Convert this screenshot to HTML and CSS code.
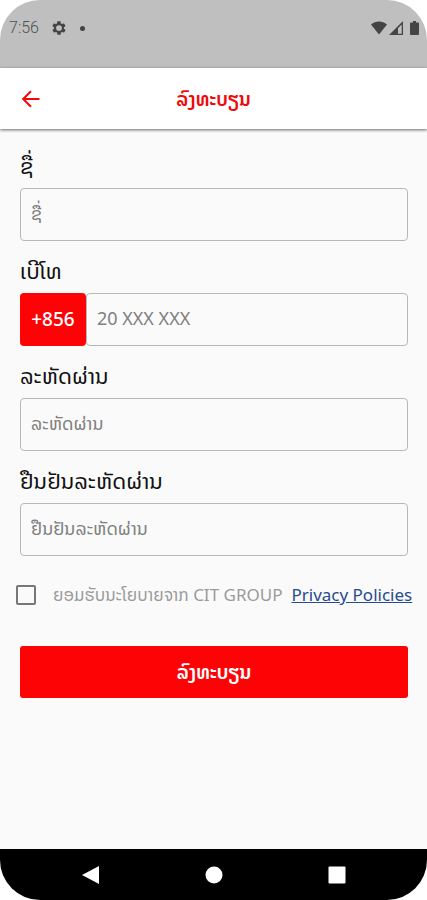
FILE: index.html
```html
<!DOCTYPE html>
<html lang="lo">
<head>
<meta charset="utf-8">
<meta name="viewport" content="width=device-width, initial-scale=1">
<title>ລົງທະບຽນ</title>
<link rel="stylesheet" href="styles.css">
</head>
<body>
<div class="phone">
  <div class="status">
    <div class="status-group">
      <span class="clock">7:56</span>
      <svg class="gear" viewBox="0 0 24 24" width="16" height="16" aria-hidden="true"><path fill-rule="evenodd" d="M19.4 13a7.500 7.500 0 0 0 0-2l2.100-1.600a.5.5 0 0 0 .1-.7l-2-3.400a.5.5 0 0 0-.6-.2l-2.500 1a7.300 7.300 0 0 0-1.700-1l-.4-2.700a.5.5 0 0 0-.5-.4h-4a.5.5 0 0 0-.5.4L9 5.100a7.700 7.700 0 0 0-1.700 1l-2.500-1a.5.5 0 0 0-.6.2l-2 3.400a.5.5 0 0 0 .1.700L4.500 11a7.500 7.500 0 0 0 0 2l-2.100 1.600a.5.5 0 0 0-.1.700l2 3.400c.1.200.4.300.6.200l2.500-1c.5.400 1.100.7 1.700 1l.4 2.700c0 .2.200.4.500.4h4c.3 0 .5-.2.5-.4l.4-2.700c.6-.3 1.200-.6 1.700-1l2.500 1c.2.100.5 0 .6-.2l2-3.400a.5.5 0 0 0-.1-.7zM12 16.300a4.300 4.300 0 1 1 0-8.600 4.300 4.300 0 0 1 0 8.600z"/></svg>
      <span class="dot"></span>
    </div>
    <div class="status-group status-right">
      <svg viewBox="0 0 16 14" width="16" height="14" aria-hidden="true"><path d="M0 3.500C4.500-.5 11.500-.5 16 3.500L8 13.500z"/></svg>
      <svg class="signal" viewBox="0 0 14 14" width="14" height="14" aria-hidden="true"><path fill-rule="evenodd" d="M14 0v14H0zM12.700 3.500L9 7.200v5.500h3.700z"/></svg>
      <svg class="battery" viewBox="0 0 9 14" width="9" height="14" aria-hidden="true"><path d="M3 0h3v1.500h2q1 0 1 1V13q0 1-1 1H1q-1 0-1-1V2.500q0-1 1-1h2z"/></svg>
    </div>
  </div>
  <header class="bar">
    <button class="back" type="button" aria-label="ກັບຄືນ">
      <svg viewBox="0 0 18 18" width="18" height="18" aria-hidden="true"><path d="M17.500 9H1.500M9 1.200L1.200 9 9 16.800"/></svg>
    </button>
    <h1 class="title">ລົງທະບຽນ</h1>
  </header>
  <form class="form">
    <div class="field">
      <label for="name">ຊື່</label>
      <input class="box" id="name" type="text" placeholder="ຊື່">
    </div>
    <div class="field">
      <label for="phone">ເບີໂທ</label>
      <div class="phone-row">
        <span class="code">+856</span>
        <input class="box" id="phone" type="tel" placeholder="20 XXX XXX">
      </div>
    </div>
    <div class="field">
      <label for="password">ລະຫັດຜ່ານ</label>
      <input class="box" id="password" type="password" placeholder="ລະຫັດຜ່ານ">
    </div>
    <div class="field">
      <label for="confirm">ຢືນຢັນລະຫັດຜ່ານ</label>
      <input class="box" id="confirm" type="password" placeholder="ຢືນຢັນລະຫັດຜ່ານ">
    </div>
    <div class="terms">
      <input class="check" id="agree" type="checkbox">
      <label for="agree">ຍອມຮັບນະໂຍບາຍຈາກ CIT GROUP</label>
      <a href="#privacy">Privacy Policies</a>
    </div>
    <button class="submit" type="submit">ລົງທະບຽນ</button>
  </form>
  <nav class="nav">
    <button type="button" aria-label="Back"><svg viewBox="0 0 18 18" width="18" height="18" aria-hidden="true"><path d="M17 0v18L0 9z"/></svg></button>
    <button type="button" aria-label="Home"><svg viewBox="0 0 18 18" width="18" height="18" aria-hidden="true"><circle cx="9" cy="9" r="8.500"/></svg></button>
    <button type="button" aria-label="Recents"><svg viewBox="0 0 18 18" width="18" height="18" aria-hidden="true"><rect x="0.500" y="0.500" width="17" height="17" rx="1"/></svg></button>
  </nav>
</div>
</body>
</html>
```
FILE: styles.css
```css
* {
  box-sizing: border-box;
}

body {
  margin: 0;
  background: #fff;
  font-family: "Noto Sans", "Noto Sans Lao", "DejaVu Sans", sans-serif;
}

button,
input {
  font: inherit;
}

button {
  border: 0;
  padding: 0;
  background: none;
}

.phone {
  display: flex;
  flex-direction: column;
  min-height: 100vh;
  border-radius: 40px;
  overflow: hidden;
  background: #fafafa;
}

.status {
  display: flex;
  justify-content: space-between;
  align-items: flex-start;
  height: 68px;
  padding: 18px 8px 0 9px;
  background: #bfbfbf;
  color: #505050;
}

.status-group {
  display: flex;
  align-items: center;
  height: 20px;
}

.status svg {
  fill: #444;
}

.clock {
  font: 300 16px/20px Roboto, sans-serif;
}

.gear {
  margin-left: 12px;
}

.dot {
  width: 5px;
  height: 5px;
  margin-left: 13px;
  border-radius: 50%;
  background: #444;
}

.signal {
  margin-left: 2px;
}

.battery {
  margin-left: 7px;
}

.bar {
  display: grid;
  grid-template-columns: 62px 1fr 62px;
  align-items: center;
  height: 61px;
  background: #fff;
  box-shadow: 0 1px 3px rgba(0, 0, 0, 0.6);
}

.back {
  display: grid;
  place-items: center;
  height: 48px;
}

.back svg {
  fill: none;
  stroke: #f00a0a;
  stroke-width: 2;
}

.title {
  margin: 0;
  color: #f00a0a;
  font-size: 19px;
  line-height: 24px;
  font-weight: 600;
  text-align: center;
}

.form {
  flex: 1;
  padding: 19px 19px 0 20px;
}

.field {
  margin-bottom: 12px;
}

.field label {
  display: block;
  height: 40px;
  color: #111;
  font-size: 22px;
  line-height: 34px;
}

.box {
  display: block;
  width: 100%;
  min-width: 0;
  height: 53px;
  padding: 0 10px 4px;
  border: 1px solid #b8b8b8;
  border-radius: 4px;
  background: transparent;
  color: #222;
  font-size: 18px;
}

.box::placeholder {
  color: #808080;
  opacity: 1;
}

.phone-row {
  display: flex;
}

.code {
  flex: none;
  width: 66px;
  border-radius: 4px;
  background: #fe0306;
  color: #fff;
  font-size: 19px;
  font-weight: 500;
  line-height: 53px;
  text-align: center;
}

.terms {
  display: flex;
  align-items: baseline;
  margin: 27px -12px 0 -4px;
  color: #9b9b9b;
  font-size: 17px;
  line-height: 24px;
  white-space: nowrap;
}

.check {
  appearance: none;
  flex: none;
  align-self: center;
  width: 20px;
  height: 20px;
  margin: 0 17px 0 0;
  border: 2px solid #777;
  border-radius: 2px;
}

.check:checked {
  background: #fe0306;
}

.terms a {
  margin-left: 9px;
  color: #274b8d;
}

.submit {
  display: block;
  width: 100%;
  height: 52px;
  margin-top: 39px;
  border-radius: 3px;
  background: #fe0306;
  color: #fff;
  font-size: 19px;
  font-weight: 600;
}

.nav {
  display: flex;
  justify-content: center;
  gap: 105px;
  height: 51px;
  background: #000;
}

.nav button {
  display: grid;
  place-items: center;
}

.nav svg {
  fill: #fff;
}
```
